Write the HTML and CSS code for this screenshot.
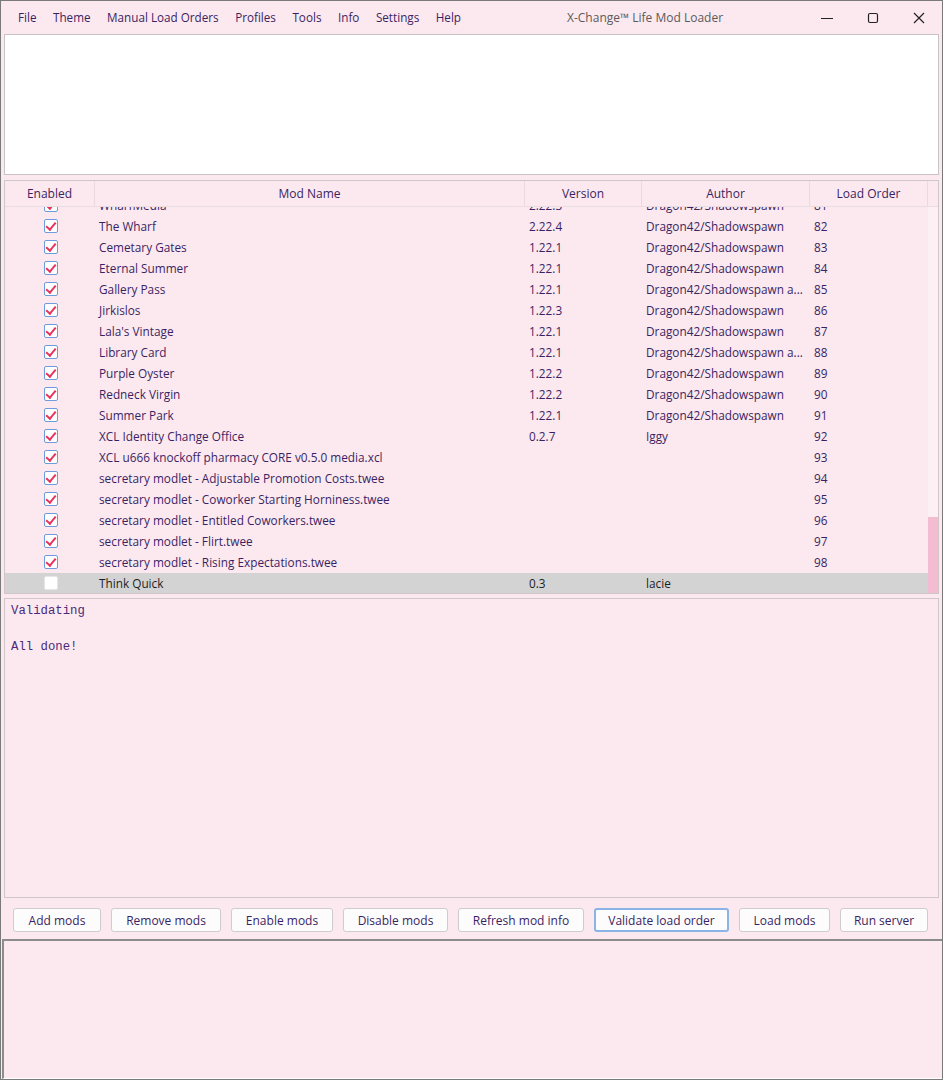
FILE: index.html
```html
<!DOCTYPE html>
<html>
<head>
<meta charset="utf-8">
<title>X-Change Life Mod Loader</title>
<link rel="stylesheet" href="styles.css">
</head>
<body>
<div class="window">
  <header class="titlebar">
    <nav class="menu">
      <span>File</span><span>Theme</span><span>Manual Load Orders</span><span>Profiles</span><span>Tools</span><span>Info</span><span>Settings</span><span>Help</span>
    </nav>
    <div class="title">X-Change™ Life Mod Loader</div>
    <div class="controls">
      <span class="ctl"><svg width="12" height="12" viewBox="0 0 12 12"><line x1="0" y1="6.5" x2="12" y2="6.5" stroke="#222" stroke-width="1"/></svg></span>
      <span class="ctl"><svg width="12" height="12" viewBox="0 0 12 12"><rect x="1.5" y="1.5" width="9" height="9" rx="1.5" fill="none" stroke="#222" stroke-width="1.2"/></svg></span>
      <span class="ctl"><svg width="12" height="12" viewBox="0 0 12 12"><path d="M1 1 L11 11 M11 1 L1 11" stroke="#222" stroke-width="1.2"/></svg></span>
    </div>
  </header>

  <div class="topbox"></div>

  <section class="table">
    <div class="thead">
      <div class="th">Enabled</div>
      <div class="th">Mod Name</div>
      <div class="th">Version</div>
      <div class="th">Author</div>
      <div class="th">Load Order</div>
    </div>
    <div class="tbody">
      <div class="rows">
        <div class="row"><span class="cb on"></span><span>WharfMedia</span><span>2.22.3</span><span>Dragon42/Shadowspawn</span><span>81</span></div>
        <div class="row"><span class="cb on"></span><span>The Wharf</span><span>2.22.4</span><span>Dragon42/Shadowspawn</span><span>82</span></div>
        <div class="row"><span class="cb on"></span><span>Cemetary Gates</span><span>1.22.1</span><span>Dragon42/Shadowspawn</span><span>83</span></div>
        <div class="row"><span class="cb on"></span><span>Eternal Summer</span><span>1.22.1</span><span>Dragon42/Shadowspawn</span><span>84</span></div>
        <div class="row"><span class="cb on"></span><span>Gallery Pass</span><span>1.22.1</span><span>Dragon42/Shadowspawn a...</span><span>85</span></div>
        <div class="row"><span class="cb on"></span><span>Jirkislos</span><span>1.22.3</span><span>Dragon42/Shadowspawn</span><span>86</span></div>
        <div class="row"><span class="cb on"></span><span>Lala's Vintage</span><span>1.22.1</span><span>Dragon42/Shadowspawn</span><span>87</span></div>
        <div class="row"><span class="cb on"></span><span>Library Card</span><span>1.22.1</span><span>Dragon42/Shadowspawn a...</span><span>88</span></div>
        <div class="row"><span class="cb on"></span><span>Purple Oyster</span><span>1.22.2</span><span>Dragon42/Shadowspawn</span><span>89</span></div>
        <div class="row"><span class="cb on"></span><span>Redneck Virgin</span><span>1.22.2</span><span>Dragon42/Shadowspawn</span><span>90</span></div>
        <div class="row"><span class="cb on"></span><span>Summer Park</span><span>1.22.1</span><span>Dragon42/Shadowspawn</span><span>91</span></div>
        <div class="row"><span class="cb on"></span><span>XCL Identity Change Office</span><span>0.2.7</span><span>Iggy</span><span>92</span></div>
        <div class="row"><span class="cb on"></span><span>XCL u666 knockoff pharmacy CORE v0.5.0 media.xcl</span><span></span><span></span><span>93</span></div>
        <div class="row"><span class="cb on"></span><span>secretary modlet - Adjustable Promotion Costs.twee</span><span></span><span></span><span>94</span></div>
        <div class="row"><span class="cb on"></span><span>secretary modlet - Coworker Starting Horniness.twee</span><span></span><span></span><span>95</span></div>
        <div class="row"><span class="cb on"></span><span>secretary modlet - Entitled Coworkers.twee</span><span></span><span></span><span>96</span></div>
        <div class="row"><span class="cb on"></span><span>secretary modlet - Flirt.twee</span><span></span><span></span><span>97</span></div>
        <div class="row"><span class="cb on"></span><span>secretary modlet - Rising Expectations.twee</span><span></span><span></span><span>98</span></div>
        <div class="row selected"><span class="cb"></span><span>Think Quick</span><span>0.3</span><span>lacie</span><span></span></div>
      </div>
      <div class="scrollbar"><div class="thumb"></div></div>
    </div>
  </section>

  <pre class="console">Validating

All done!</pre>

  <div class="buttons">
    <button class="btn b1">Add mods</button>
    <button class="btn b2">Remove mods</button>
    <button class="btn b3">Enable mods</button>
    <button class="btn b4">Disable mods</button>
    <button class="btn b5">Refresh mod info</button>
    <button class="btn b6 focus">Validate load order</button>
    <button class="btn b7">Load mods</button>
    <button class="btn b8">Run server</button>
  </div>

  <div class="bottom"></div>
</div>
</body>
</html>
```

FILE: styles.css
```css
* { box-sizing: border-box; }
html, body { margin: 0; padding: 0; }
body {
  font-family: "Open Sans", "Noto Sans", sans-serif;
  font-size: 12px;
  color: #3a1f63;
  background: #fce9ef;
}
.window {
  width: 943px;
  height: 1080px;
  border: 1px solid #7a7a7a;
  background: #fce9ef;
  display: flex;
  flex-direction: column;
  overflow: hidden;
}
.titlebar {
  height: 33px;
  display: flex;
  align-items: center;
  position: relative;
  flex: none;
}
.menu {
  display: flex;
  gap: 16.5px;
  padding-left: 17px;
  padding-bottom: 2px;
  font-size: 11.7px;
}
.title {
  position: absolute;
  left: 566px;
  top: 0;
  line-height: 33px;
  color: #5a5a5a;
  font-size: 12px;
}
.controls {
  margin-left: auto;
  display: flex;
}
.ctl {
  width: 46px;
  height: 33px;
  display: flex;
  align-items: center;
  justify-content: center;
}
.topbox {
  flex: none;
  height: 141px;
  margin: 0 3px 0 3px;
  background: #fff;
  border: 1px solid #c9c3c6;
}
.table {
  flex: none;
  height: 414px;
  margin: 5px 3px 0 3px;
  border: 1px solid #cfc6ca;
  display: flex;
  flex-direction: column;
}
.thead {
  display: grid;
  grid-template-columns: 90px 430px 117px 168px 118px;
  height: 26px;
  border-bottom: 1px solid #eadde2;
  flex: none;
}
.th {
  text-align: center;
  line-height: 25px;
  border-right: 1px solid #e8dadf;
  font-size: 12px;
}
.tbody {
  flex: 1;
  display: flex;
  overflow: hidden;
}
.rows {
  width: 923px;
  margin-top: -12px;
}
.row {
  display: grid;
  grid-template-columns: 90px 430px 117px 168px 118px;
  height: 21px;
  padding-bottom: 2px;
  align-items: center;
  white-space: nowrap;
  font-size: 11.8px;
}
.row span { padding-left: 4px; overflow: hidden; }
.row .cb {
  justify-self: center;
  padding: 0;
  width: 14px;
  height: 14px;
  margin-left: 1px;
  background: #fff;
  border: 1.5px solid #6e9bdc;
  border-radius: 2px;
  position: relative;
}
.row .cb.on::after {
  content: "";
  position: absolute;
  left: 3.5px;
  top: 0px;
  width: 3.5px;
  height: 8px;
  border-right: 2px solid #e8345a;
  border-bottom: 2px solid #e8345a;
  transform: rotate(40deg);
}
.row.selected {
  background: #d3d3d3;
  color: #1e1e1e;
}
.row.selected .cb { border: 1px solid #e6e6e6; }
.scrollbar {
  width: 11px;
  flex: none;
  background: #fdf0f4;
  display: flex;
  flex-direction: column;
  justify-content: flex-end;
}
.thumb {
  height: 76px;
  background: #f4bcd1;
}
.console {
  flex: none;
  height: 300px;
  margin: 4px 3px 0 3px;
  padding: 3px 6px;
  border: 1px solid #cfc6ca;
  font-family: "Liberation Mono", "Courier New", monospace;
  font-size: 12.3px;
  line-height: 18px;
  color: #4a2a7a;
}
.buttons {
  flex: none;
  display: flex;
  padding: 10px 0 0 12px;
  height: 41px;
}
.btn {
  height: 24px;
  margin-right: 10px;
  background: #fdfcfd;
  border: 1px solid #d0cbce;
  border-radius: 3px;
  font-family: "Open Sans", "Noto Sans", sans-serif;
  font-size: 12px;
  color: #3a1f63;
  padding: 0;
}
.b1 { width: 88px; }
.b2 { width: 110px; }
.b3 { width: 102px; }
.b4 { width: 105px; }
.b5 { width: 126px; }
.b6 { width: 135px; }
.b7 { width: 91px; }
.b8 { width: 88px; }
.btn.focus { border: 2px solid #8ab3e6; }
.bottom {
  flex: 1;
  margin: 0 0 0 1px;
  border-top: 2px solid #8c8c8c;
  border-left: 2px solid #8c8c8c;
  border-bottom: 1px solid #fff;
  background: #fce9ef;
}
```
